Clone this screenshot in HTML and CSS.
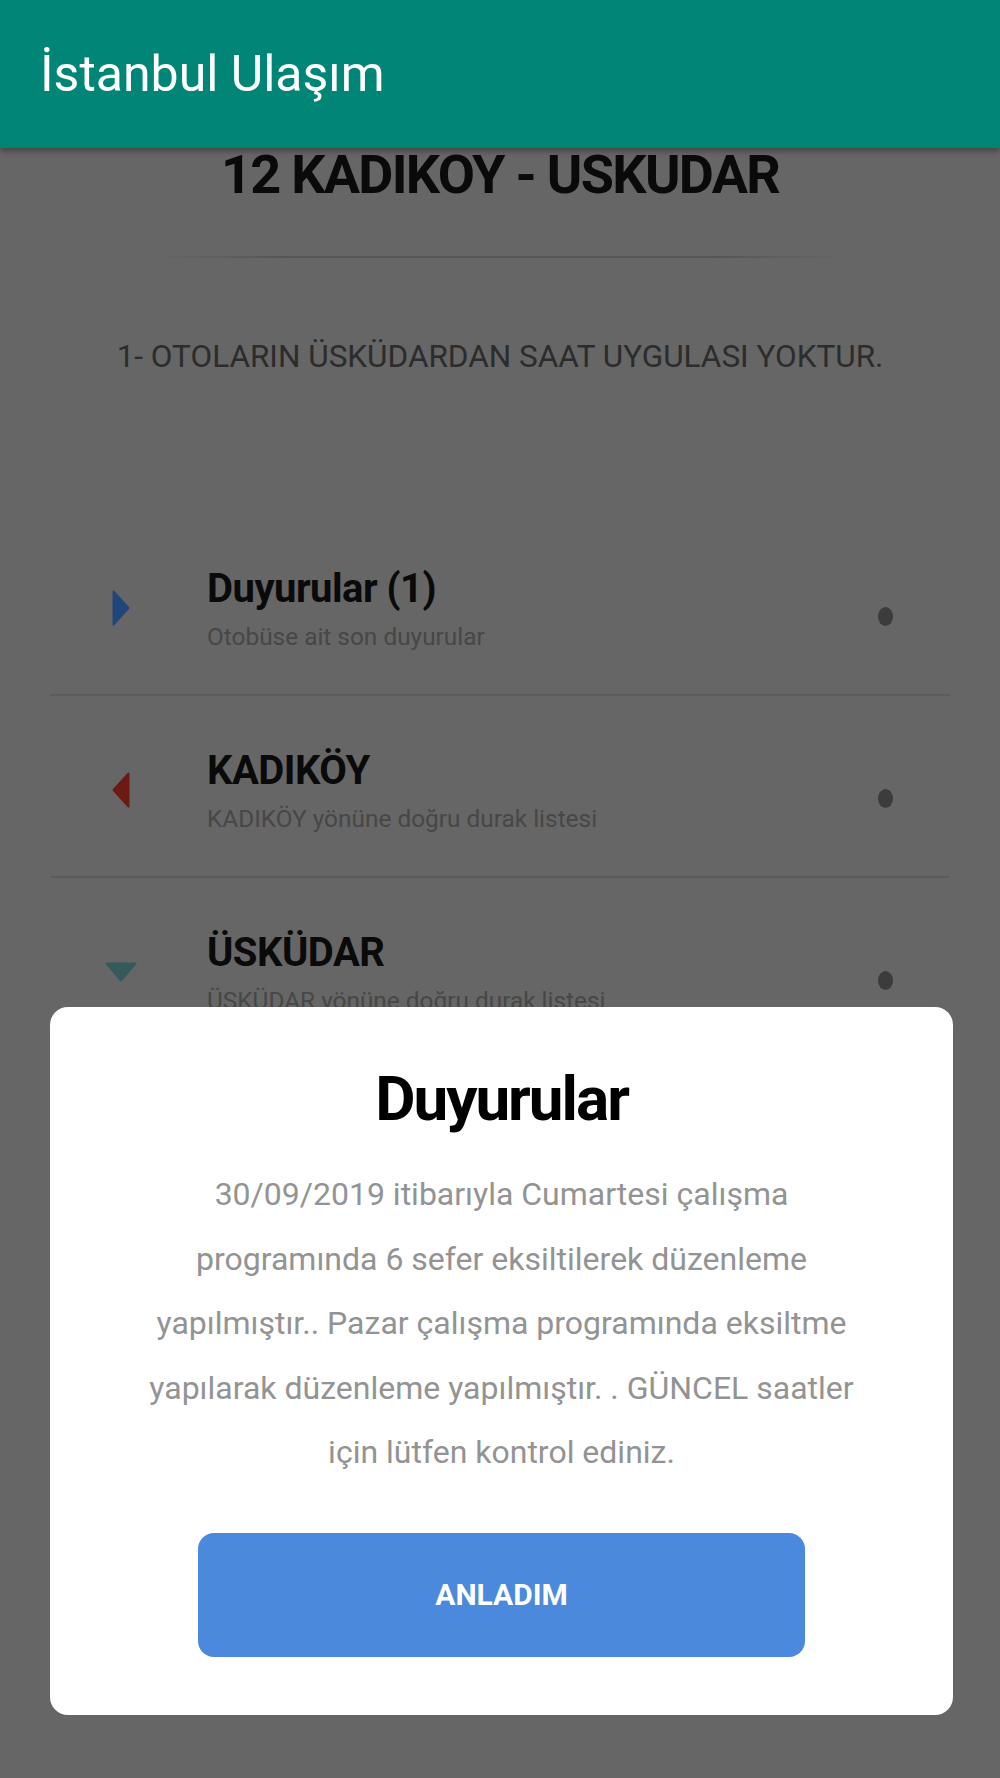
FILE: index.html
```html
<!DOCTYPE html>
<html lang="tr">
<head>
    <meta charset="UTF-8">
    <meta name="viewport" content="width=device-width, initial-scale=1.0">
    <title>İstanbul Ulaşım</title>
    <link rel="stylesheet" href="styles.css">
</head>
<body>

<div class="app">
    <!-- Ust bar -->
    <header class="toolbar">
        <span class="toolbar-title">İstanbul Ulaşım</span>
    </header>

    <main class="content">
        <h1 class="line-title">12 KADIKOY - USKUDAR</h1>
        <div class="title-rule"></div>
        <p class="line-note">1- OTOLARIN ÜSKÜDARDAN SAAT UYGULASI YOKTUR.</p>

        <ul class="menu">
            <li class="menu-item">
                <span class="menu-icon">
                    <svg width="18" height="36" viewBox="0 0 18 36"><path d="M1.5 1.5 L16.5 18 L1.5 34.5 Z" fill="#22467a" stroke="#22467a" stroke-width="2" stroke-linejoin="round"/></svg>
                </span>
                <div class="menu-text">
                    <div class="menu-title">Duyurular (1)</div>
                    <div class="menu-sub">Otobüse ait son duyurular</div>
                </div>
                <span class="menu-dot"></span>
            </li>
            <li class="menu-item">
                <span class="menu-icon">
                    <svg width="18" height="36" viewBox="0 0 18 36"><path d="M16.5 1.5 L1.5 18 L16.5 34.5 Z" fill="#6e1a14" stroke="#6e1a14" stroke-width="2" stroke-linejoin="round"/></svg>
                </span>
                <div class="menu-text">
                    <div class="menu-title">KADIKÖY</div>
                    <div class="menu-sub">KADIKÖY yönüne doğru durak listesi</div>
                </div>
                <span class="menu-dot"></span>
            </li>
            <li class="menu-item">
                <span class="menu-icon">
                    <svg width="32" height="20" viewBox="0 0 32 20"><path d="M1.5 1.5 L30.5 1.5 L16 18.5 Z" fill="#345a5b" stroke="#345a5b" stroke-width="2" stroke-linejoin="round"/></svg>
                </span>
                <div class="menu-text">
                    <div class="menu-title">ÜSKÜDAR</div>
                    <div class="menu-sub">ÜSKÜDAR yönüne doğru durak listesi</div>
                </div>
                <span class="menu-dot"></span>
            </li>
        </ul>
    </main>

    <!-- Duyuru penceresi -->
    <div class="dialog">
        <h2 class="dialog-title">Duyurular</h2>
        <p class="dialog-text">30/09/2019 itibarıyla Cumartesi çalışma programında 6 sefer eksiltilerek düzenleme yapılmıştır.. Pazar çalışma programında eksiltme yapılarak düzenleme yapılmıştır. . GÜNCEL saatler için lütfen kontrol ediniz.</p>
        <button class="dialog-button">ANLADIM</button>
    </div>
</div>

</body>
</html>
```

FILE: styles.css
```css
body {
    margin: 0;
    font-family: Roboto, "Liberation Sans", sans-serif;
    background: #666666;
}
.app {
    position: relative;
    width: 1000px;
    height: 1778px;
    overflow: hidden;
}
.toolbar {
    position: relative;
    z-index: 2;
    height: 148px;
    padding-left: 40px;
    display: flex;
    align-items: center;
    background: #008577;
    box-shadow: 0 3px 6px rgba(0, 0, 0, 0.35);
}
.toolbar-title {
    color: #fff;
    font-size: 50px;
    line-height: 1;
}
.content {
    position: relative;
    z-index: 1;
}
.line-title {
    margin: -2px 0 0;
    text-align: center;
    font-size: 54px;
    line-height: 58px;
    letter-spacing: -1.7px;
    font-weight: bold;
    color: #0a0a0a;
}
.title-rule {
    width: 690px;
    height: 2px;
    margin: 52px auto 0;
    background: linear-gradient(90deg, rgba(80, 80, 80, 0), #555 20%, #555 80%, rgba(80, 80, 80, 0));
}
.line-note {
    margin: 80px 0 0;
    text-align: center;
    font-size: 31.5px;
    line-height: 37px;
    color: #2c2c2c;
}
.menu {
    list-style: none;
    margin: 139px 50px 0;
    padding: 0;
}
.menu-item {
    display: flex;
    height: 182px;
    box-sizing: border-box;
    border-bottom: 2px solid #5c5c5c;
    padding-top: 51px;
}
.menu-item:last-child {
    border-bottom: none;
}
.menu-icon {
    width: 142px;
    height: 78px;
    margin-top: 4px;
    display: flex;
    justify-content: center;
    align-items: center;
}
.menu-icon svg {
    display: block;
}
.menu-text {
    flex: 1;
    margin-left: 15px;
}
.menu-title {
    font-size: 40px;
    line-height: 48px;
    letter-spacing: -0.5px;
    font-weight: bold;
    color: #0a0a0a;
}
.menu-sub {
    margin-top: 9px;
    font-size: 24.4px;
    line-height: 30px;
    color: #474747;
}
.menu-dot {
    width: 15px;
    height: 19px;
    margin: 42px 57px 0 0;
    border-radius: 50%;
    background: #3c3c3c;
}
.dialog {
    position: absolute;
    z-index: 3;
    top: 1007px;
    left: 50px;
    width: 903px;
    height: 708px;
    box-sizing: border-box;
    padding: 59px 80px 0;
    background: #fff;
    border-radius: 18px;
    text-align: center;
}
.dialog-title {
    margin: 0;
    font-size: 62px;
    line-height: 66px;
    letter-spacing: -2px;
    font-weight: bold;
    color: #000;
}
.dialog-text {
    margin: 30px 0 0;
    font-size: 32px;
    line-height: 64.5px;
    color: #939393;
}
.dialog-button {
    display: block;
    width: 607px;
    height: 124px;
    margin: 48px auto 0;
    border: none;
    border-radius: 16px;
    background: #4a89dc;
    color: #fff;
    font-family: Roboto, "Liberation Sans", sans-serif;
    font-size: 30px;
    font-weight: bold;
}
```
